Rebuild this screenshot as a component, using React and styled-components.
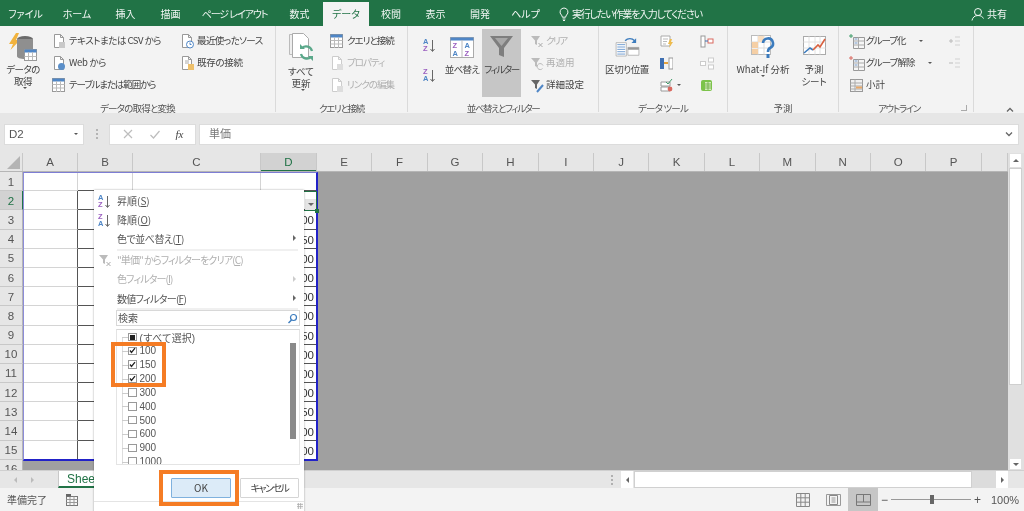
import React from "react";
import styled, { createGlobalStyle } from "styled-components";

const Global = createGlobalStyle`
  html, body { margin: 0; padding: 0; background: #e6e6e6; }
  * { box-sizing: border-box; }
  body { font-family: "Noto Sans CJK JP", "Liberation Sans", sans-serif; font-feature-settings: "palt"; }
`;

const Page = styled.div`
  position: relative; width: 1024px; height: 511px; overflow: hidden;
  display: flex; flex-direction: column; background: #e6e6e6; color: #444;
  font-size: 10px; line-height: 1.2; filter: blur(0.3px);
`;

/* ---------- tab bar ---------- */
const TabBar = styled.div`
  height: 26px; flex: none; background: #217346; display: flex; align-items: stretch; padding-top: 2px; color: #f2f7f4;
`;
const Tab = styled.div`
  width: ${p => p.$w}px; display: flex; align-items: center; justify-content: center;
  font-size: 10px; white-space: nowrap; letter-spacing: ${p => p.$sp || 0}px;
  background: ${p => (p.$active ? "#f3f3f3" : "transparent")};
  color: ${p => (p.$active ? "#217346" : "inherit")};
`;
const TellMe = styled.div`
  display: flex; align-items: center; gap: 3px; margin-left: 10px; font-size: 10px; white-space: nowrap; width: 412px; letter-spacing: -1.2px;
`;
const Share = styled.div`display: flex; align-items: center; gap: 2px; font-size: 10px; white-space: nowrap;`;

/* ---------- ribbon ---------- */
const Ribbon = styled.div`
  height: 87px; flex: none; background: #f3f3f3; display: flex; position: relative;
`;
const Group = styled.div`
  width: ${p => p.$w}px; flex: none; display: flex; flex-direction: column;
  border-right: ${p => (p.$last ? "none" : "1px solid #dadada")}; margin-bottom: 1px; position: relative;
`;
const GroupBody = styled.div`
  height: 75px; display: flex; padding: 4px 0 0 ${p => p.$pad || 0}px; gap: ${p => p.$gap || 0}px; align-items: flex-start; flex: none;
`;
const GroupLabel = styled.div`
  text-align: center; font-size: 9.5px; color: #555; line-height: 14px; height: 11px; white-space: nowrap;
  letter-spacing: ${p => p.$sp || 0}px; padding-right: ${p => p.$pr || 0}px;
`;
const Big = styled.div`
  width: ${p => p.$w}px; flex: none; height: 68px; display: flex; flex-direction: column; align-items: center; padding-top: 3px;
  font-size: 9.5px; line-height: 12px; text-align: center; white-space: nowrap;
  margin-left: ${p => p.$ml || 0}px; margin-top: -1px; letter-spacing: ${p => p.$sp || 0}px;
  color: ${p => (p.$muted ? "#aaa" : "#444")};
  background: ${p => (p.$active ? "#c6c6c6" : "transparent")};
`;
const BigIcon = styled.div`height: 30px; display: flex; align-items: center; justify-content: center; margin-bottom: ${p => p.$mb ?? 1}px;`;
const Col = styled.div`
  display: flex; flex-direction: column; flex: none; width: ${p => (p.$w ? p.$w + "px" : "auto")}; margin-left: ${p => p.$ml || 0}px;
`;
const AzStack = styled.div`
  display: flex; flex-direction: column; flex: none; width: 21px; padding-top: 7px; gap: 13px;
`;
const Small = styled.div`
  height: 22px; display: flex; align-items: center; gap: 1px; white-space: nowrap; font-size: 9.5px;
  letter-spacing: ${p => p.$sp || 0}px;
  color: ${p => (p.$muted ? "#b0b0b0" : "#444")};
`;
const Caret = styled.span`
  display: inline-block; width: 0; height: 0; border-left: 2px solid transparent; border-right: 2px solid transparent;
  border-top: 2px solid #555; margin-left: ${p => p.$ml ?? 3}px; vertical-align: middle;
`;
const CollapseBtn = styled.div`position: absolute; right: 9px; bottom: 1px; width: 10px; height: 8px;`;
const Launcher = styled.div`position: absolute; right: 6px; bottom: 1px; width: 6px; height: 6px; border: 1px solid #aaa; border-top: none; border-left: none;`;

/* ---------- formula bar ---------- */
const FormulaBar = styled.div`
  height: 40px; flex: none; display: flex; align-items: center; padding: 2px 5px 0 4px; background: #e6e6e6;
`;
const NameBox = styled.div`
  width: 80px; height: 21px; background: #fff; display: flex; align-items: center; justify-content: space-between;
  padding: 0 5px 0 4px; font: 11.5px "Liberation Sans", sans-serif; color: #555; border: 1px solid #dcdcdc;
`;
const Grip = styled.div`
  width: 25px; display: flex; flex-direction: column; align-items: center; gap: 2px;
  span { width: 2px; height: 2px; background: #b4b4b4; }
`;
const FxBox = styled.div`
  width: 87px; height: 21px; background: #fff; display: flex; align-items: center; justify-content: space-around;
  padding: 0 4px; border: 1px solid #dcdcdc; color: #bbb; margin-right: 3px;
`;
const Fx = styled.i`font: italic 11px "Liberation Serif", serif; color: #444;`;
const FormulaInput = styled.div`
  flex: 1; height: 21px; background: #fff; border: 1px solid #dcdcdc; display: flex; align-items: center; justify-content: space-between;
  padding: 0 4px 0 9px; font-size: 11px; color: #777;
`;

/* ---------- sheet ---------- */
const SheetArea = styled.div`flex: 1; display: flex; min-height: 0; position: relative;`;
const SheetMain = styled.div`width: 1008px; display: flex; flex-direction: column; overflow: hidden; position: relative; height: 317px;`;
const HeadRow = styled.div`display: flex; height: 19px; flex: none; background: #e6e6e6; border-bottom: 1px solid #b5b5b5;`;
const Corner = styled.div`
  width: 23px; flex: none; position: relative; border-right: 1px solid #c8c8c8;
  &::after { content: ""; position: absolute; right: 2px; bottom: 2px; border-style: solid; border-width: 0 0 13px 13px; border-color: transparent transparent #b4b4b4 transparent; }
`;
const ColHead = styled.div`
  width: ${p => p.$w}px; flex: none; display: flex; align-items: center; justify-content: center;
  font: 11.5px "Liberation Sans", sans-serif; color: ${p => (p.$sel ? "#1f7145" : "#555")};
  background: ${p => (p.$sel ? "#d2d2d2" : "transparent")};
  border-right: 1px solid #c8c8c8;
  box-shadow: ${p => (p.$sel ? "inset 0 -1px 0 #217346" : "none")};
`;
const Rows = styled.div`background: #a0a0a0; flex: 1; display: flex; flex-direction: column;`;
const SheetRow = styled.div`display: flex; height: 19.2px; flex: none;`;
const RowHead = styled.div`
  width: 23px; flex: none; display: flex; align-items: center; justify-content: center; padding-top: 1px;
  font: 11.5px "Liberation Sans", sans-serif; color: ${p => (p.$sel ? "#1f7145" : "#555")};
  background: ${p => (p.$sel ? "#d2d2d2" : "#e6e6e6")};
  border-bottom: 1px solid #c8c8c8; border-right: 1px solid ${p => (p.$sel ? "#217346" : "#b5b5b5")};
`;
const Cell = styled.div`
  width: ${p => p.$w}px; flex: none; background: #fff; display: flex; align-items: center; justify-content: flex-end;
  font: 11.5px "Liberation Sans", sans-serif; color: #333; padding: 2px 2px 0 0;
  border-right: 1px solid ${p => (p.$darkRight ? "#555" : "#d4d4d4")};
  border-bottom: 1px solid ${p => (p.$darkBottom ? "#555" : "#d4d4d4")};
`;
const Range = styled.div`
  position: absolute; left: 22.5px; top: 19px; width: 295px; height: 288.5px;
  border: 1.5px solid #2222c8; border-top-color: #7d7dd4; border-left-color: #8c8cd8; border-right-width: 2px; border-bottom-width: 2px;
  pointer-events: none;
`;
const ActiveCell = styled.div`
  position: absolute; left: 261px; top: 38px; width: 56px; height: 20px; border: 1.5px solid #217346; pointer-events: none;
  &::after { content: ""; position: absolute; right: -2.5px; bottom: -2.5px; width: 4px; height: 4px; background: #217346; }
`;
const FilterBtn = styled.div`
  position: absolute; left: 43px; top: 6.5px; width: 11px; height: 11px; background: #e4e4e4; display: flex; align-items: center; justify-content: center;
`;
const VScroll = styled.div`width: 16px; height: 317px; background: #e0e0e0; display: flex; flex-direction: column; padding-left: 1px; flex: none;`;
const ScrollBtn = styled.div`
  width: 13px; height: ${p => p.$h}px; background: #fff; border: 1px solid #e0e0e0; display: flex; align-items: center; justify-content: center; flex: none;
`;
const VThumb = styled.div`width: 13px; height: 217px; background: #fff; border: 1px solid #cfcfcf; flex: none;`;
const Spacer = styled.div`flex: 1;`;
const Tri = styled.span`
  width: 0; height: 0; display: block;
  ${p => p.$dir === "up" && "border-left:3px solid transparent;border-right:3px solid transparent;border-bottom:3px solid #666;"}
  ${p => p.$dir === "down" && "border-left:3px solid transparent;border-right:3px solid transparent;border-top:3px solid #666;"}
  ${p => p.$dir === "left" && "border-top:3px solid transparent;border-bottom:3px solid transparent;border-right:3px solid " + (p.$c || "#666") + ";"}
  ${p => p.$dir === "right" && "border-top:3px solid transparent;border-bottom:3px solid transparent;border-left:3px solid " + (p.$c || "#666") + ";"}
`;

/* ---------- sheet tabs ---------- */
const TabsBar = styled.div`
  height: 18px; flex: none; background: #e6e6e6; display: flex; align-items: stretch; border-top: 1px solid #cfcfcf;
`;
const TabArrows = styled.div`width: 58px; display: flex; align-items: center; gap: 14px; padding-left: 14px; flex: none;`;
const SheetTab = styled.div`
  width: 60px; background: #fff; color: #217346; font: 12px "Liberation Sans", sans-serif; padding: 1px 0 0 8px;
  border-bottom: 2px solid #217346; border-left: 1px solid #c8c8c8; flex: none;
`;
const TabsFill = styled.div`flex: 1;`;
const HDots = styled.div`
  width: 10px; display: flex; flex-direction: column; align-items: center; justify-content: center; gap: 2px; margin-right: 4px;
  span { width: 2px; height: 2px; background: #b0b0b0; }
`;
const HBtn = styled.div`width: 12px; background: #fff; display: flex; align-items: center; justify-content: center; margin-right: ${p => p.$mr || 0}px; flex: none;`;
const HThumb = styled.div`width: 338px; margin-left: 1px; background: #fff; border: 1px solid #d0d0d0; flex: none;`;
const HTrack = styled.div`width: 24px; background: #dcdcdc; flex: none;`;

/* ---------- status bar ---------- */
const StatusBar = styled.div`
  height: 23px; flex: none; background: #f3f3f3; display: flex; align-items: center; padding-left: 7px; font-size: 10px; color: #555;
`;
const StatusIcon = styled.div`margin-left: 19px; display: flex;`;
const ViewBtn = styled.div`
  width: 30px; height: 23px; display: flex; align-items: center; justify-content: center; flex: none;
  background: ${p => (p.$active ? "#c6c6c6" : "transparent")};
`;
const ZoomWrap = styled.div`display: flex; align-items: center; margin-left: 3px; width: 100px; font: 12px "Liberation Sans", sans-serif; color: #555; gap: 3px;`;
const Slider = styled.div`
  flex: 1; height: 1px; background: #999; position: relative;
  &::after { content: ""; position: absolute; left: 39px; top: -4px; width: 4px; height: 9px; background: #666; }
`;
const ZoomPct = styled.div`margin-left: 10px; width: 33px; font: 11px "Liberation Sans", sans-serif; color: #555;`;

/* ---------- filter popup ---------- */
const Popup = styled.div`
  position: absolute; left: 94px; top: 190px; width: 210px; height: 330px; background: #fff;
  box-shadow: 0 0 2px rgba(0,0,0,.35); font-size: 10px; color: #555; padding-top: 1px;
`;
const MenuItem = styled.div`
  height: 19.2px; display: flex; align-items: center; padding: 0 8px 0 23px; position: relative; white-space: nowrap;
  letter-spacing: ${p => p.$sp || 0}px;
  color: ${p => (p.$muted ? "#b0b0b0" : "#555")};
`;
const MenuIcon = styled.span`position: absolute; left: 4px; top: 2px; display: flex;`;
const MenuArrow = styled.span`position: absolute; right: 8px; top: 6px;`;
const MenuSep = styled.div`height: 2px; margin: 0 6px 0 23px; background: #f0f0f0;`;
const Search = styled.div`
  margin: 0 4px 0 22px; height: 16px; border: 1px solid #d8d8d8; display: flex; align-items: center; justify-content: space-between;
  padding: 0 1px; font-size: 10px; color: #555;
`;
const ListBox = styled.div`
  margin: 3px 4px 0 22px; height: 136px; border: 1px solid #e4e4e4; border-top: 1px solid #d8d8d8; position: relative; overflow: hidden;
`;
const ListItem = styled.div`
  height: 13.85px; display: flex; align-items: center; padding-left: 11px; gap: 3px; font: 10px "Liberation Sans", "Noto Sans CJK JP", sans-serif;
  color: #555; white-space: nowrap; position: relative;
  &::before { content: ""; position: absolute; left: 5px; top: 7px; width: 6px; height: 1px; background: #ccc; }
`;
const TreeLine = styled.div`position: absolute; left: 5px; top: 7px; bottom: 0; width: 1px; background: #ddd;`;
const Check = styled.span`
  width: 8.5px; height: 8.5px; border: 1px solid #999; background: #fff; display: flex; align-items: center; justify-content: center; flex: none; position: relative;
`;
const ListThumb = styled.div`position: absolute; right: 3px; top: 13px; width: 6px; height: 96px; background: #8a8a8a;`;
const Buttons = styled.div`display: flex; justify-content: flex-end; gap: 9px; padding: 13px 5px 0 0;`;
const DlgBtn = styled.div`
  width: ${p => p.$w}px; height: 20px; display: flex; align-items: center; justify-content: center; font-size: 10px; color: #444;
  letter-spacing: ${p => p.$sp || 0}px;
  background: ${p => (p.$primary ? "#dcebf8" : "#fff")}; border: 1px solid ${p => (p.$primary ? "#7fb1de" : "#d5d5d5")}; border-radius: 1px;
`;
const BtnSep = styled.div`height: 1px; margin-top: 3px; background: #e4e4e4;`;
const ResizeGrip = styled.div`position: absolute; left: 203px; top: 313px; width: 6px; height: 6px;
  background-image: radial-gradient(#aaa 1px, transparent 1px); background-size: 2.5px 2.5px;`;
const Highlight = styled.div`
  position: absolute; left: ${p => p.$x}px; top: ${p => p.$y}px; width: ${p => p.$w}px; height: ${p => p.$h}px;
  border: 4px solid #f57c24; pointer-events: none;
`;

/* ---------- icons ---------- */
const Svg = ({ w = 16, h = 16, vb, children }) => (
  <svg width={w} height={h} viewBox={vb || `0 0 ${w} ${h}`} fill="none" style={{ flex: "none" }}>{children}</svg>
);
const Doc = ({ s = "#999" }) => <path d="M2.500 1.500h6l3 3v10h-9z M8.500 1.500v3h3" stroke={s} fill="#fff" />;
const TextFileIcon = ({ muted }) => <Svg><Doc s={muted ? "#ccc" : "#999"} /><path d="M7 9h6v6H7z" fill={muted ? "#ddd" : "#c9c9c9"} /></Svg>;
const WebIcon = () => <Svg><Doc /><circle cx="9.500" cy="11.500" r="3.500" fill="#5b8fc9" /></Svg>;
const TableIcon = () => (
  <Svg w={16} h={14} vb="0 0 16 14">
    <rect x=".5" y=".5" width="12" height="13" fill="#fff" stroke="#999" />
    <rect x=".5" y=".5" width="12" height="3" fill="#4f86c6" />
    <path d="M.5 6.500h12M.5 10h12M4.500 3v11M8.500 3v11" stroke="#bbb" />
  </Svg>
);
const RecentIcon = () => <Svg><Doc /><circle cx="10" cy="11.500" r="3.500" fill="#fff" stroke="#4f86c6" /><path d="M10 9.500v2h1.500" stroke="#4f86c6" /></Svg>;
const ExistIcon = () => <Svg><Doc /><path d="M5 6h4M5 8h4" stroke="#aaa" /><rect x="8" y="9" width="6" height="6" fill="#eec06b" /></Svg>;
const GetDataIcon = () => (
  <Svg w={28} h={28}>
    <path d="M7 0L0 11h4L1.500 17 11 7H7l3-7z" fill="#f2b33d" />
    <ellipse cx="16" cy="6" rx="8" ry="3" fill="#6b6b6b" />
    <path d="M8 6v17c0 2 3 3 8 3s8-1 8-3V6z" fill="#8f8f8f" />
    <rect x="15.500" y="16.500" width="12" height="11" fill="#fff" stroke="#999" />
    <rect x="15.500" y="16.500" width="12" height="3" fill="#4f86c6" />
    <path d="M15.500 23.500h12M19.500 19v8M23.500 19v8" stroke="#bbb" />
  </Svg>
);
const RefreshAllIcon = () => (
  <Svg w={28} h={28}>
    <path d="M2.500 1.500h10v20h-10z" fill="#eee" stroke="#bbb" />
    <path d="M5.500.5h11l5 5v19h-16z" fill="#fff" stroke="#aaa" />
    <path d="M25 18a6 6 0 0 0-10-3M14 21a6 6 0 0 0 10 3" stroke="#5aa88a" strokeWidth="2.200" />
    <path d="M13 11v5h5z M26 28v-5h-5z" fill="#5aa88a" />
  </Svg>
);
const AzIcon = ({ rev }) => (
  <svg width="12" height="17" viewBox="0 0 12 17" style={{ flex: "none" }}>
    <text x="0" y="7" fontSize="7.500" fontWeight="700" fontFamily="Liberation Sans" fill={rev ? "#9a5fc0" : "#4f86c6"}>{rev ? "Z" : "A"}</text>
    <text x="0" y="14" fontSize="7.500" fontWeight="700" fontFamily="Liberation Sans" fill={rev ? "#4f86c6" : "#9a5fc0"}>{rev ? "A" : "Z"}</text>
    <path d="M9.500 3v11M7.500 12l2 2.500 2-2.500" stroke="#666" fill="none" />
  </svg>
);
const SortIcon = () => (
  <svg width="24" height="21" viewBox="0 0 24 21">
    <rect x=".5" y=".5" width="23" height="20" fill="#fff" stroke="#aaa" />
    <rect x=".5" y=".5" width="23" height="3" fill="#4f86c6" />
    <path d="M12 3v17" stroke="#bbb" />
    <text x="2.500" y="11" fontSize="7.500" fontWeight="700" fontFamily="Liberation Sans" fill="#9a5fc0">Z</text>
    <text x="2.500" y="18.500" fontSize="7.500" fontWeight="700" fontFamily="Liberation Sans" fill="#4f86c6">A</text>
    <text x="14.500" y="11" fontSize="7.500" fontWeight="700" fontFamily="Liberation Sans" fill="#4f86c6">A</text>
    <text x="14.500" y="18.500" fontSize="7.500" fontWeight="700" fontFamily="Liberation Sans" fill="#9a5fc0">Z</text>
  </svg>
);
const FunnelIcon = () => (
  <Svg w={24} h={24}>
    <path d="M0 1h23L14 13v9l-5-2v-7z" fill="#7e7e7e" />
    <path d="M5 3h13l-6.500 8z" fill="#a8a8a8" />
  </Svg>
);
const SmallFunnel = ({ c = "#bbb", children }) => (
  <Svg w={15} h={15}>
    <path d="M1 2h9L7 6.500V11L5 10V6.500z" fill={c} />
    {children}
  </Svg>
);
const ClearFunnel = () => <SmallFunnel><path d="M8.500 9l4 4M12.500 9l-4 4" stroke="#aaa" /></SmallFunnel>;
const ReapplyFunnel = () => <SmallFunnel><path d="M13 9.500a3 3 0 1 0-.5 3" stroke="#bbb" fill="none" /></SmallFunnel>;
const AdvFunnel = () => <SmallFunnel c="#666"><path d="M7 14l6-7" stroke="#4f86c6" strokeWidth="2" /></SmallFunnel>;
const ColsIcon = () => (
  <Svg w={27} h={22} vb="0 0 34 28">
    <path d="M2.500 8.500h13v17h-13z" fill="#fff" stroke="#aaa" />
    <path d="M4 11h10M4 14h10M4 17h10M4 20h10M4 23h10" stroke="#4f86c6" />
    <path d="M17.500 14.500h14v10h-14z" fill="#fff" stroke="#aaa" />
    <path d="M17.500 14.500h14v3h-14z" fill="#999" />
    <path d="M14 6a8 8 0 0 1 12 0" stroke="#3b7bbd" strokeWidth="1.800" />
    <path d="M28 3v6h-6z" fill="#3b7bbd" />
  </Svg>
);
const FlashIcon = () => <Svg w={13} h={13}><path d="M1 1h9v10H1z" fill="#fff" stroke="#aaa" /><path d="M3 4h5M3 6.500h4M3 9h3" stroke="#bbb" /><path d="M10 4L8 9h2l-1 4 4-6h-2l1-3z" fill="#eebb4d" /></Svg>;
const MergeIcon = () => <Svg w={13} h={13}><rect x="0" y="1" width="4" height="11" fill="#3f6fb1" /><rect x="9" y="1" width="4" height="11" fill="#fff" stroke="#999" /><path d="M4 6h4" stroke="#e4a23d" strokeWidth="2" /></Svg>;
const ValidIcon = () => <Svg w={13} h={13}><path d="M1 3h9v4H1zM1 8h9v4H1z" fill="#fff" stroke="#999" /><path d="M6 3l2 2 4-5" stroke="#3f9c6a" /><circle cx="10" cy="10" r="2.400" fill="#d9695f" /></Svg>;
const RelIcon = () => <Svg w={14} h={13}><rect x="1" y="1" width="4" height="11" fill="#fff" stroke="#999" /><rect x="8" y="4" width="5" height="4" fill="#fff" stroke="#d9695f" /><path d="M5 6h3" stroke="#3f6fb1" /></Svg>;
const DiagramIcon = () => <Svg w={14} h={13}><rect x=".5" y="4.500" width="5" height="4" fill="#fff" stroke="#ccc" /><rect x="8.500" y="1" width="5" height="4" fill="#fff" stroke="#ccc" /><rect x="8.500" y="8" width="5" height="4" fill="#fff" stroke="#ccc" /></Svg>;
const ModelIcon = () => <Svg w={13} h={13}><rect x="1" y="1" width="11" height="11" rx="2" fill="#7cc34a" /><path d="M5 3h6v8H5z" fill="#d3ecb9" /><path d="M5 5h6M5 7h6M5 9h6M8 3v8" stroke="#5ba432" strokeWidth=".7" /></Svg>;
const WhatIfIcon = () => (
  <Svg w={24} h={24}>
    <rect x=".5" y=".5" width="19" height="19" fill="#fff" stroke="#bbb" />
    <path d="M.5 7h19M.5 13h19M7 .5v19M13 .5v19" stroke="#ddd" />
    <rect x="1" y="7" width="6" height="6" fill="#f5cfa5" /><rect x="7" y="1" width="6" height="6" fill="#f8dfc3" /><rect x="1" y="14" width="6" height="5" fill="#f5cfa5" />
    <path d="M12 8a5 5 0 1 1 7 5c-2 1-2 2-2 4" stroke="#3b7bbd" strokeWidth="2.600" />
    <rect x="15.500" y="19" width="3" height="4" fill="#3b7bbd" />
  </Svg>
);
const ForecastIcon = () => (
  <Svg w={23} h={22}>
    <rect x=".5" y=".5" width="22" height="18" fill="#fff" stroke="#aaa" />
    <path d="M.5 6h22M.5 12h22M6 .5v18M12 .5v18M17 .5v18" stroke="#e2e2e2" />
    <path d="M1 17l6-5 3 2" stroke="#3b7bbd" strokeWidth="1.600" />
    <path d="M10 14l5-5 2 2 5-8" stroke="#d9603f" strokeWidth="1.600" />
  </Svg>
);
const OutlineIcon = ({ mark = "#3f9c6a" }) => (
  <Svg w={16} h={15}>
    <path d="M4.500 3.500h11v11h-11z" fill="#f6f6f6" stroke="#999" />
    <path d="M4.500 7h11M4.500 11h11M9.500 3.500v11" stroke="#aaa" />
    <rect x="5.500" y="4" width="3" height="2" fill="#b5c8e0" /><rect x="5.500" y="8" width="3" height="2" fill="#b5c8e0" />
    <path d="M0 2h4M2 0v4" stroke={mark} />
  </Svg>
);
const SumIcon = () => (
  <Svg w={16} h={15}>
    <rect x="1.500" y="1.500" width="12" height="12" fill="#f0f0f0" stroke="#999" />
    <path d="M1.500 5h12M1.500 8h12M1.500 11h12M6 1.500v12" stroke="#aaa" />
    <rect x="7" y="8.500" width="6" height="2" fill="#e8a868" />
  </Svg>
);
const OutlinePlus = ({ sign }) => (
  <Svg w={13} h={13}>
    <path d="M7 2h5M7 6h5M7 10h5" stroke="#ddd" strokeWidth="1.500" />
    <path d={sign === "+" ? "M1 6h4M3 4v4" : "M1 6h4"} stroke="#bbb" />
  </Svg>
);
const BulbIcon = () => (
  <Svg w={10} h={14}>
    <path d="M5 1a4 4 0 0 0-2.600 7c.6.6.8 1.200.9 2.200h3.400c.1-1 .3-1.600.9-2.200A4 4 0 0 0 5 1zM3.600 12h2.800M4 13.500h2" stroke="#f2f7f4" />
  </Svg>
);
const UserIcon = () => (
  <Svg w={14} h={14}>
    <circle cx="7" cy="5" r="3.500" stroke="#f2f7f4" />
    <path d="M1 13.500c.6-3 2.500-5 6-5 3.200 0 4.800 1.500 5.500 3" stroke="#f2f7f4" />
  </Svg>
);
const Chevron = ({ up }) => (
  <Svg w={10} h={8}><path d={up ? "M2 5.500l3-3 3 3" : "M2 2.500l3 3 3-3"} stroke="#666" strokeWidth="1.300" /></Svg>
);
const X = () => <Svg w={12} h={12}><path d="M2 2l8 8M10 2l-8 8" stroke="#bdbdbd" strokeWidth="1.200" /></Svg>;
const Tick = () => <Svg w={12} h={12}><path d="M1.500 7l3 3 6-7" stroke="#bdbdbd" strokeWidth="1.200" /></Svg>;
const Mag = () => <Svg w={11} h={11}><circle cx="6.500" cy="4.500" r="3" stroke="#3b7bbd" strokeWidth="1.200" /><path d="M4.500 7l-3 3" stroke="#3b7bbd" strokeWidth="1.400" /></Svg>;
const CheckMark = () => <Svg w={7} h={7}><path d="M1 3.500l1.500 2L6 1.200" stroke="#222" strokeWidth="1.300" /></Svg>;
const StatusTable = () => <Svg w={12} h={12}><rect x=".5" y="2.500" width="11" height="9" fill="#f7f7f7" stroke="#777" /><path d="M.5 5.500h11M.5 8.500h11M4 2.500v9M8 2.500v9" stroke="#999" /><rect x="0" y="0" width="5" height="2.500" fill="#666" /></Svg>;
const GridView = () => <Svg w={14} h={14}><path d="M.5.5h13v13H.5zM.5 4.800h13M.5 9.200h13M4.800.5v13M9.200.5v13" stroke="#888" /></Svg>;
const LayoutView = () => <Svg w={15} h={14}><path d="M.5 1.500h14v11H.5z" stroke="#999" /><path d="M3.500 2.500h8v9h-8z" stroke="#888" /><path d="M5.500 5h4M5.500 7h4M5.500 9h4" stroke="#999" /></Svg>;
const BreakView = () => <Svg w={15} h={14}><path d="M.5 1.500h14v11H.5zM.5 9h14M7.500 1.500V9" stroke="#777" /></Svg>;

/* ---------- data ---------- */
const tabs = [["ファイル", 51], ["ホーム", 52], ["挿入", 45], ["描画", 45], ["ページ レイアウト", 83, false, -1.100], ["数式", 47], ["データ", 46, true], ["校閲", 44], ["表示", 45], ["開発", 44], ["ヘルプ", 47]];
const colW = [55, 55, 128, 56];
const colHeads = [["A", 55], ["B", 55], ["C", 128], ["D", 56, true], ["E", 55.4], ["F", 55.4], ["G", 55.4], ["H", 55.4], ["I", 55.4], ["J", 55.4], ["K", 55.4], ["L", 55.4], ["M", 55.4], ["N", 55.4], ["O", 55.4], ["P", 55.4], ["", 26]];
const values = { 3: 100, 4: 150, 5: 200, 6: 300, 7: 400, 8: 500, 9: 150, 10: 200, 11: 100, 12: 600, 13: 150, 14: 900, 15: 1000 };
const listItems = [["100", 1], ["150", 1], ["200", 1], ["300"], ["400"], ["500"], ["600"], ["900"], ["1000"]];
const rows = Array.from({ length: 16 }, (_, i) => i + 1);

export default function App() {
  return (
    <Page>
      <Global />
      <TabBar>
        {tabs.map(([t, w, a, sp]) => <Tab key={t} $w={w} $active={a} $sp={sp}>{t}</Tab>)}
        <TellMe><BulbIcon />実行したい作業を入力してください</TellMe>
        <Share><UserIcon />共有</Share>
      </TabBar>

      <Ribbon>
        <Group $w={276}>
          <GroupBody $pad={4}>
            <Big $w={38} $sp={-0.6}><BigIcon><GetDataIcon /></BigIcon>データの<br />取得<Caret /></Big>
            <Col $w={128} $ml={10}>
              <Small $sp={-0.5}><TextFileIcon />テキストまたは CSV から</Small>
              <Small $sp={-0.3}><WebIcon />Web から</Small>
              <Small $sp={-1.100}><TableIcon />テーブルまたは範囲から</Small>
            </Col>
            <Col $w={90}>
              <Small $sp={-0.6}><RecentIcon />最近使ったソース</Small>
              <Small $sp={-0.3}><ExistIcon />既存の接続</Small>
            </Col>
          </GroupBody>
          <GroupLabel $sp={-0.8}>データの取得と変換</GroupLabel>
        </Group>
        <Group $w={132}>
          <GroupBody $pad={7}>
            <Big $w={36}><BigIcon $mb={3}><RefreshAllIcon /></BigIcon>すべて<br />更新<Caret /></Big>
            <Col $ml={11}>
              <Small $sp={-1}><TableIcon />クエリと接続</Small>
              <Small $muted $sp={-1}><TextFileIcon muted />プロパティ</Small>
              <Small $muted $sp={-1}><TextFileIcon muted />リンクの編集</Small>
            </Col>
          </GroupBody>
          <GroupLabel $sp={-1.300}>クエリと接続</GroupLabel>
        </Group>
        <Group $w={191}>
          <GroupBody $pad={15}>
            <AzStack><AzIcon /><AzIcon rev /></AzStack>
            <Big $w={36} $sp={-0.7}><BigIcon $mb={1}><SortIcon /></BigIcon>並べ替え</Big>
            <Big $w={39} $ml={2} $active $sp={-1.400}><BigIcon $mb={1}><FunnelIcon /></BigIcon>フィルター</Big>
            <Col $ml={9}>
              <Small $muted $sp={-1.500}><ClearFunnel />クリア</Small>
              <Small $muted><ReapplyFunnel />再適用</Small>
              <Small><AdvFunnel />詳細設定</Small>
            </Col>
          </GroupBody>
          <GroupLabel $sp={-1.500}>並べ替えとフィルター</GroupLabel>
        </Group>
        <Group $w={129}>
          <GroupBody $pad={5}>
            <Big $w={46} $sp={-0.4}><BigIcon><ColsIcon /></BigIcon>区切り位置</Big>
            <Col $ml={10} $w={40}>
              <Small><FlashIcon /></Small>
              <Small><MergeIcon /></Small>
              <Small><ValidIcon /><Caret $ml={3} /></Small>
            </Col>
            <Col $w={20}>
              <Small><RelIcon /></Small>
              <Small><DiagramIcon /></Small>
              <Small><ModelIcon /></Small>
            </Col>
          </GroupBody>
          <GroupLabel $sp={-0.8}>データ ツール</GroupLabel>
        </Group>
        <Group $w={111}>
          <GroupBody $pad={5}>
            <Big $w={60}><BigIcon><WhatIfIcon /></BigIcon>What-If 分析<br /><Caret $ml={0} /></Big>
            <Big $w={36} $ml={3}><BigIcon><ForecastIcon /></BigIcon>予測<br />シート</Big>
          </GroupBody>
          <GroupLabel>予測</GroupLabel>
        </Group>
        <Group $w={135}>
          <GroupBody $pad={10}>
            <Col $w={99}>
              <Small $sp={-1}><OutlineIcon />グループ化<Caret $ml={12} /></Small>
              <Small $sp={-0.9}><OutlineIcon mark="#d9695f" />グループ解除<Caret $ml={12} /></Small>
              <Small><SumIcon />小計</Small>
            </Col>
            <Col>
              <Small><OutlinePlus sign="+" /></Small>
              <Small><OutlinePlus sign="-" /></Small>
            </Col>
          </GroupBody>
          <GroupLabel $sp={-1.300} $pr={14}>アウトライン</GroupLabel>
          <Launcher />
        </Group>
        <CollapseBtn><Chevron up /></CollapseBtn>
      </Ribbon>

      <FormulaBar>
        <NameBox>D2<Caret $ml={0} /></NameBox>
        <Grip><span /><span /><span /></Grip>
        <FxBox><X /><Tick /><Fx>fx</Fx></FxBox>
        <FormulaInput>単価<Chevron /></FormulaInput>
      </FormulaBar>

      <SheetArea>
        <SheetMain>
          <HeadRow>
            <Corner />
            {colHeads.map(([c, w, s]) => <ColHead key={c || "q"} $w={w} $sel={s}>{c}</ColHead>)}
          </HeadRow>
          <Rows>
            {rows.map(r => (
              <SheetRow key={r}>
                <RowHead $sel={r === 2}>{r}</RowHead>
                {r < 16 && colW.map((w, i) => (
                  <Cell key={i} $w={w} $darkRight={r >= 2} $darkBottom={i > 0}>
                    {i === 3 && values[r]}
                  </Cell>
                ))}
              </SheetRow>
            ))}
          </Rows>
          <Range />
          <ActiveCell><FilterBtn><Tri $dir="down" /></FilterBtn></ActiveCell>
        </SheetMain>
        <VScroll>
          <ScrollBtn $h={15}><Tri $dir="up" /></ScrollBtn>
          <VThumb />
          <Spacer />
          <ScrollBtn $h={12}><Tri $dir="down" /></ScrollBtn>
        </VScroll>
      </SheetArea>

      <TabsBar>
        <TabArrows><Tri $dir="left" $c="#bbb" /><Tri $dir="right" $c="#bbb" /></TabArrows>
        <SheetTab>Sheet1</SheetTab>
        <TabsFill />
        <HDots><span /><span /><span /></HDots>
        <HBtn><Tri $dir="left" /></HBtn>
        <HThumb />
        <HTrack />
        <HBtn $mr={16}><Tri $dir="right" /></HBtn>
      </TabsBar>

      <StatusBar>
        準備完了
        <StatusIcon><StatusTable /></StatusIcon>
        <Spacer />
        <ViewBtn><GridView /></ViewBtn>
        <ViewBtn><LayoutView /></ViewBtn>
        <ViewBtn $active><BreakView /></ViewBtn>
        <ZoomWrap>−<Slider />+</ZoomWrap>
        <ZoomPct>100%</ZoomPct>
      </StatusBar>

      <Popup>
        <MenuItem><MenuIcon><AzIcon /></MenuIcon>昇順(<u>S</u>)</MenuItem>
        <MenuItem><MenuIcon><AzIcon rev /></MenuIcon>降順(<u>O</u>)</MenuItem>
        <MenuItem $sp={-0.5}>色で並べ替え(<u>T</u>)<MenuArrow><Tri $dir="right" /></MenuArrow></MenuItem>
        <MenuSep />
        <MenuItem $muted $sp={-0.9}><MenuIcon><ClearFunnel /></MenuIcon>"単価" からフィルターをクリア(<u>C</u>)</MenuItem>
        <MenuItem $muted $sp={-0.9}>色フィルター(<u>I</u>)<MenuArrow><Tri $dir="right" $c="#ccc" /></MenuArrow></MenuItem>
        <MenuItem $sp={-0.7}>数値フィルター(<u>F</u>)<MenuArrow><Tri $dir="right" /></MenuArrow></MenuItem>
        <MenuSep />
        <Search>検索<Mag /></Search>
        <ListBox>
          <TreeLine />
          <ListItem><Check><Svg w={5} h={5}><rect width="5" height="5" fill="#222" /></Svg></Check>(すべて選択)</ListItem>
          {listItems.map(([v, c]) => <ListItem key={v}><Check>{c && <CheckMark />}</Check>{v}</ListItem>)}
          <ListThumb />
        </ListBox>
        <Buttons>
          <DlgBtn $w={60} $primary>OK</DlgBtn>
          <DlgBtn $w={59} $sp={-1.500}>キャンセル</DlgBtn>
        </Buttons>
        <BtnSep />
        <ResizeGrip />
      </Popup>
      <Highlight $x={111} $y={342} $w={55} $h={45} />
      <Highlight $x={159} $y={470} $w={80} $h={36} />
    </Page>
  );
}
